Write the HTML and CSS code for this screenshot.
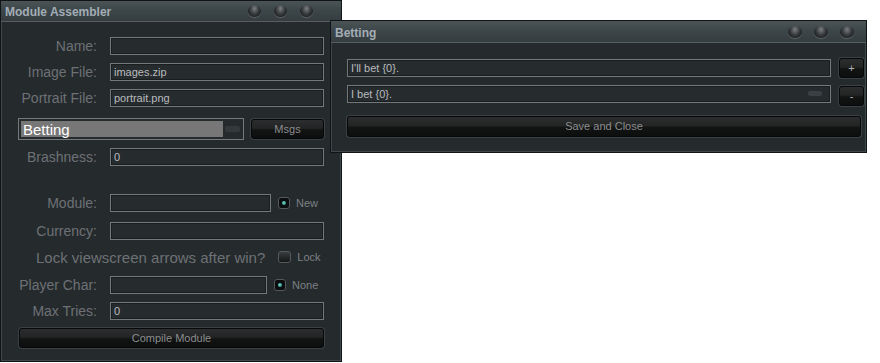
FILE: index.html
```html
<!DOCTYPE html>
<html lang="en">

<head>
    <meta charset="UTF-8" />
    <title>Module Assembler</title>
    <link rel="stylesheet" href="styles.css">
</head>

<body>
    <div class="window assembler">
        <div class="titlebar">
            <span class="title">Module Assembler</span>
            <div class="knobs"><span></span><span></span><span></span></div>
        </div>
        <div class="body">
            <div class="row">
                <label class="label">Name:</label>
                <div class="field"></div>
            </div>
            <div class="row">
                <label class="label">Image File:</label>
                <div class="field">images.zip</div>
            </div>
            <div class="row">
                <label class="label">Portrait File:</label>
                <div class="field">portrait.png</div>
            </div>
            <div class="row combo-row">
                <div class="combo">
                    <span class="combo-text">Betting</span>
                    <span class="combo-pill"></span>
                </div>
                <div class="btn msgs">Msgs</div>
            </div>
            <div class="row">
                <label class="label">Brashness:</label>
                <div class="field">0</div>
            </div>
            <div class="row module-row">
                <label class="label">Module:</label>
                <div class="field short"></div>
                <span class="radio"></span>
                <span class="opt">New</span>
            </div>
            <div class="row">
                <label class="label">Currency:</label>
                <div class="field"></div>
            </div>
            <div class="row lock-row">
                <label class="label wide">Lock viewscreen arrows after win?</label>
                <span class="check"></span>
                <span class="opt">Lock</span>
            </div>
            <div class="row">
                <label class="label">Player Char:</label>
                <div class="field shorter"></div>
                <span class="radio"></span>
                <span class="opt">None</span>
            </div>
            <div class="row">
                <label class="label">Max Tries:</label>
                <div class="field">0</div>
            </div>
            <div class="btn compile">Compile Module</div>
        </div>
    </div>

    <div class="window betting">
        <div class="titlebar">
            <span class="title">Betting</span>
            <div class="knobs"><span></span><span></span><span></span></div>
        </div>
        <div class="body">
            <div class="bet-row">
                <div class="field bet">I'll bet {0}.</div>
                <div class="btn small">+</div>
            </div>
            <div class="bet-row">
                <div class="field bet">I bet {0}.<span class="scroll-pill"></span></div>
                <div class="btn small minus">-</div>
            </div>
            <div class="btn save">Save and Close</div>
        </div>
    </div>
</body>

</html>
```

FILE: styles.css
```css
body {
    margin: 0;
    background-color: #ffffff;
    font-family: "Liberation Sans", Arial, sans-serif;
    width: 880px;
    height: 363px;
    overflow: hidden;
    position: relative;
}

.window {
    position: absolute;
    box-sizing: border-box;
    background-color: #252a2d;
    border: 1px solid #111416;
    box-shadow: inset 0 0 0 1px #3f474b;
}

.assembler {
    left: 0;
    top: 0;
    width: 342px;
    height: 362px;
}

.betting {
    left: 330px;
    top: 20px;
    width: 537px;
    height: 133px;
}

.titlebar {
    height: 20px;
    display: flex;
    align-items: center;
    justify-content: space-between;
    padding: 0 4px;
    background: linear-gradient(#4a5455, #3c4548 50%, #353d40);
    border-bottom: 1px solid #575e61;
}

.title {
    font-size: 12px;
    font-weight: bold;
    color: #a3adb6;
    padding-top: 2px;
}

.knobs {
    display: flex;
    gap: 13px;
    margin-right: 24px;
}

.knobs span {
    width: 13px;
    height: 12px;
    border-radius: 50%;
    background: radial-gradient(ellipse at 50% 30%, #7a7e80, #3a3d3f 45%, #1a1c1d 80%);
    box-shadow: 0 1px 1px #5e6568;
}

.assembler .body {
    padding: 15px 0 0 17px;
}

.row {
    display: flex;
    align-items: center;
    height: 18px;
    margin-bottom: 8px;
}

.label {
    width: 79px;
    text-align: right;
    font-size: 14px;
    color: #6d7175;
    margin-right: 13px;
    white-space: nowrap;
}

.label.wide {
    width: auto;
    font-size: 15px;
    margin-left: 18px;
    margin-right: 13px;
}

.field {
    box-sizing: border-box;
    width: 214px;
    height: 18px;
    border: 1px solid #74787a;
    box-shadow: inset 0 0 0 1px #1b1e20;
    background-color: #262b2e;
    font-size: 11px;
    color: #b9bcbe;
    padding: 2px 0 0 3px;
    position: relative;
}

.field.short {
    width: 161px;
}

.field.shorter {
    width: 157px;
}

.combo-row {
    height: 22px;
    margin-top: 11px;
    margin-bottom: 8px;
}

.combo {
    box-sizing: border-box;
    width: 226px;
    height: 22px;
    border: 1px solid #76797b;
    padding: 2px;
    display: flex;
    align-items: center;
}

.combo-text {
    flex: 1;
    height: 100%;
    background-color: #777777;
    color: #ffffff;
    font-size: 15px;
    line-height: 18px;
    padding-left: 2px;
}

.combo-pill {
    width: 15px;
    height: 6px;
    margin: 0 1px 0 2px;
    border-radius: 2px;
    background-color: #34393c;
}

.btn {
    box-sizing: border-box;
    border: 1px solid #070809;
    border-radius: 3px;
    background: linear-gradient(#2c2d2e, #232424 45%, #121313 55%, #0d0e0e);
    box-shadow: 0 0 0 1px #3a4043;
    color: #8b8d8f;
    font-size: 11px;
    text-align: center;
}

.msgs {
    width: 73px;
    height: 20px;
    line-height: 18px;
    margin-left: 7px;
}

.module-row {
    margin-top: 28px;
    margin-bottom: 10px;
}

.radio,
.check {
    box-sizing: border-box;
    width: 12px;
    height: 12px;
    border-radius: 3px;
    border: 1px solid #55595b;
    background-color: #0c0d0e;
    margin-left: 7px;
    position: relative;
}

.radio::after {
    content: "";
    position: absolute;
    left: 3px;
    top: 3px;
    width: 4px;
    height: 4px;
    border-radius: 50%;
    background: radial-gradient(circle at 40% 40%, #6fd6c8, #1f7f74);
}

.check {
    width: 13px;
    background: linear-gradient(#3a3d3f, #141617);
    margin-left: 0;
}

.opt {
    font-size: 11px;
    color: #7c8084;
    margin-left: 6px;
}

.lock-row {
    margin-bottom: 10px;
}

.lock-row .label {
    margin-left: 18px;
}

.compile {
    width: 305px;
    height: 20px;
    line-height: 18px;
    margin-left: 1px;
}

.betting .titlebar {
    height: 21px;
}

.betting .knobs {
    gap: 12px;
    margin-right: 8px;
}

.betting .knobs span {
    width: 14px;
}

.betting .body {
    padding: 15px 0 0 16px;
}

.bet-row {
    display: flex;
    align-items: center;
    height: 20px;
    margin-bottom: 6px;
}

.field.bet {
    width: 484px;
}

.scroll-pill {
    position: absolute;
    right: 8px;
    top: 5px;
    width: 14px;
    height: 5px;
    border-radius: 2px;
    background-color: #3a4043;
}

.btn.small {
    width: 25px;
    height: 20px;
    line-height: 18px;
    margin-left: 8px;
    color: #b0b2b4;
}

.btn.minus {
    margin-top: 4px;
}

.save {
    width: 514px;
    height: 21px;
    line-height: 19px;
    margin-top: 12px;
}
```
